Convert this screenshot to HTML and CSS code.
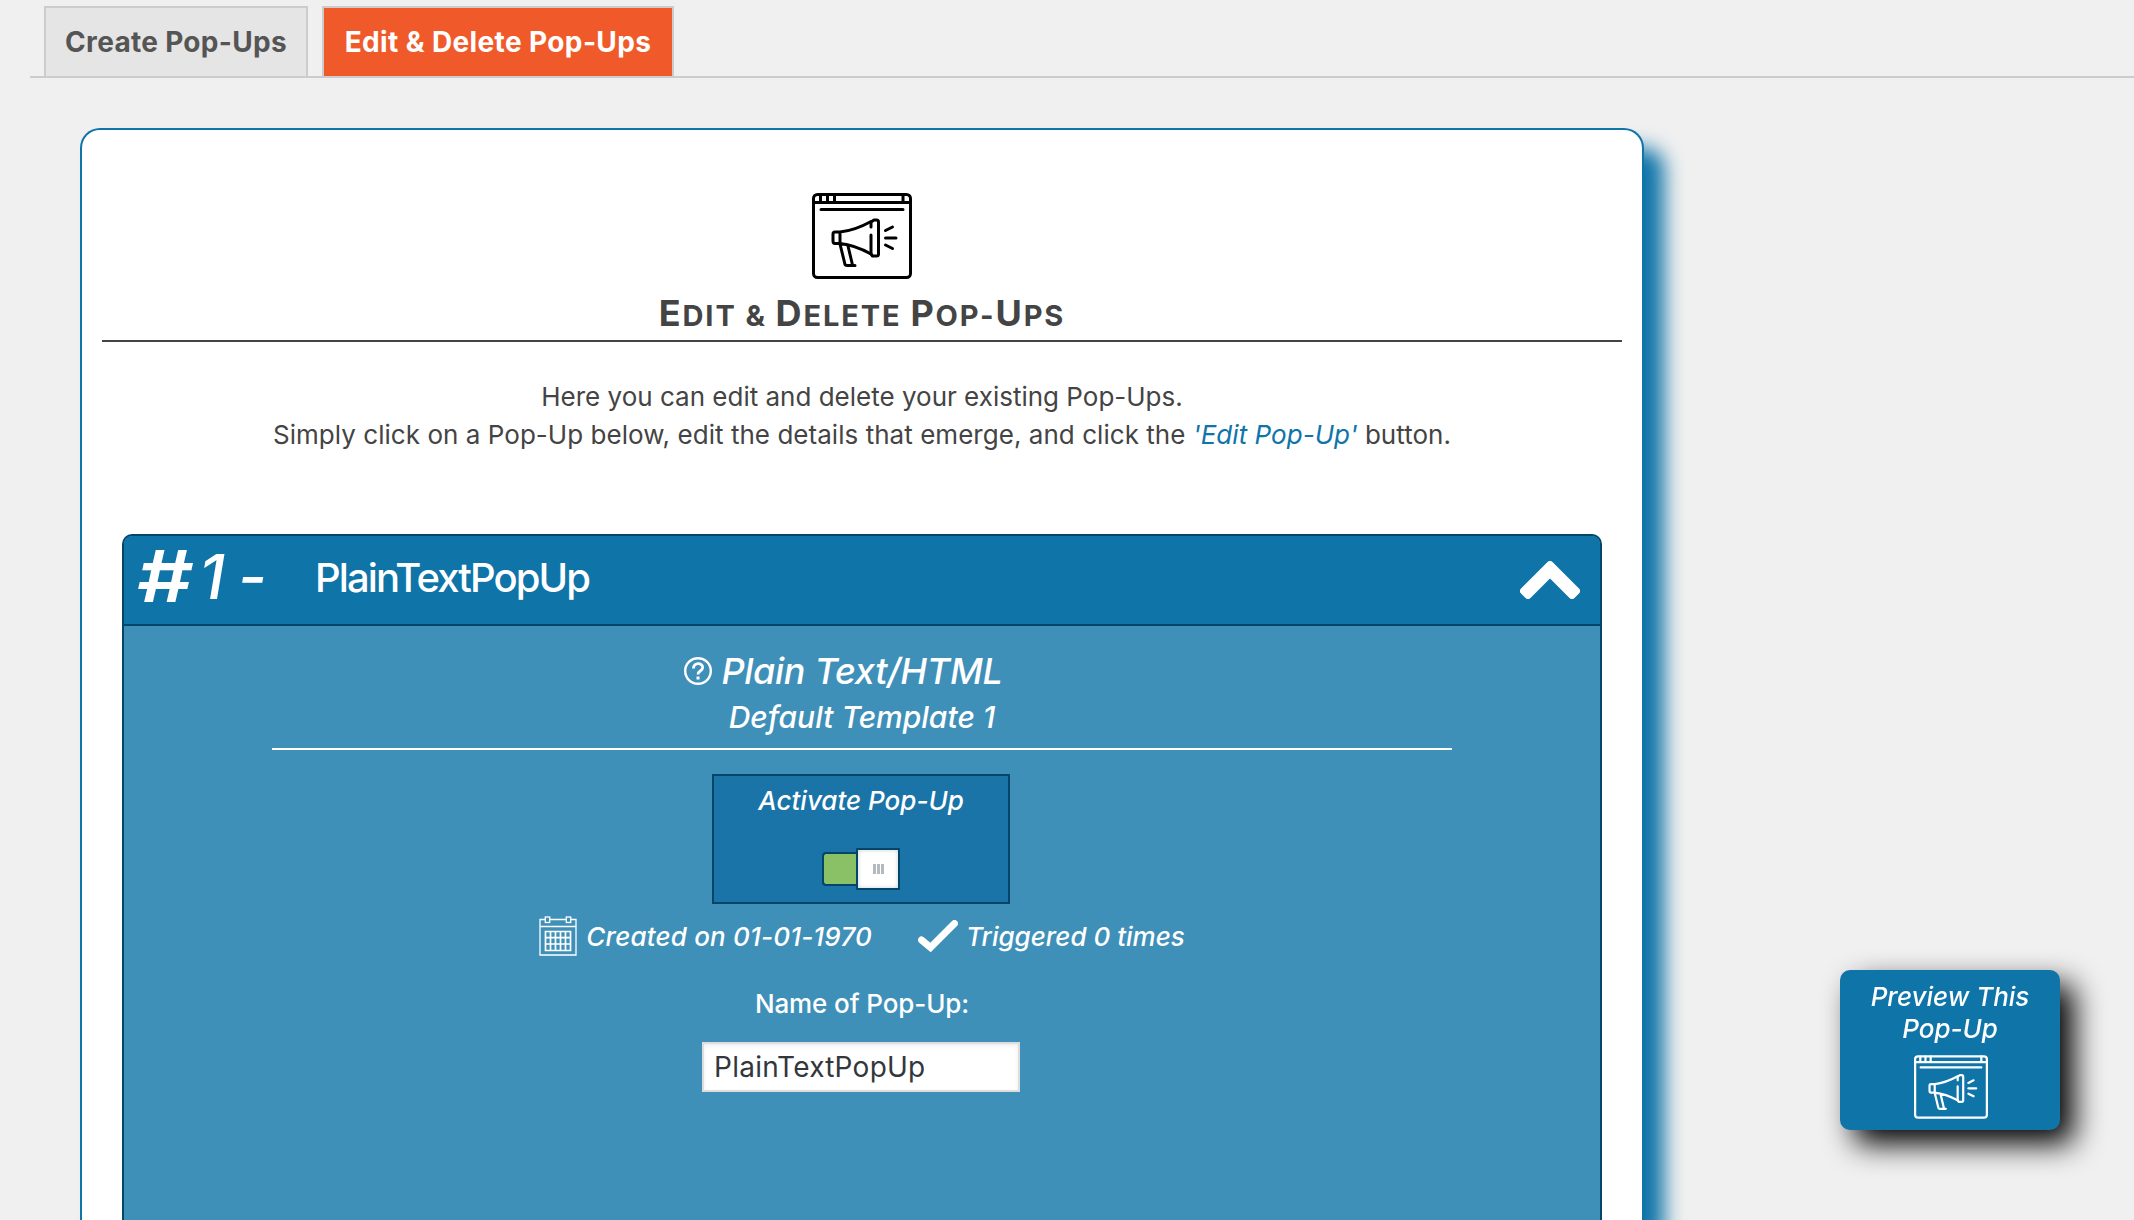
FILE: index.html
```html
<!DOCTYPE html>
<html lang="en">
<head>
<meta charset="utf-8">
<title>Edit &amp; Delete Pop-Ups</title>
<link rel="stylesheet" href="styles.css">
</head>
<body>
<svg class="defs" aria-hidden="true">
  <symbol id="megaphone" viewBox="0 0 100 86">
    <g fill="none" stroke="currentColor" stroke-width="3" stroke-linecap="round" stroke-linejoin="round">
      <rect x="1.5" y="1.5" width="97" height="83" rx="4"/>
      <path d="M1.5 9.5H98.5M8.5 2V9M15.5 2V9M22.5 2V9M91 2V9M9 16.500H91"/>
      <path d="M59 34V29L62 27H64.500Q66.500 27 66.500 29V61Q66.500 63 64.500 63H60.500L59 61V42"/>
      <path d="M59 28.500C50 33.500 38 38 28 39H23Q21 39 21 41V48Q21 50.500 23 50.500H28C38 51.500 50 56 59 61M28 39V50.500M28 51L33 71.500Q33.500 72.500 35 72.500H43M36 53L40.500 72"/>
      <path d="M73.500 37.500L80.500 34M73.500 45H84M73.500 52L80.500 55.500"/>
    </g>
  </symbol>
</svg>
<nav class="tabs">
  <a class="tab tab-create">Create Pop-Ups</a>
  <a class="tab tab-active">Edit &amp; Delete Pop-Ups</a>
</nav>
<main class="card">
  <svg class="card-icon"><use href="#megaphone"/></svg>
  <h1 class="card-title">E<small>dit &amp; </small>D<small>elete </small>P<small>op-</small>U<small>ps</small></h1>
  <p class="intro">Here you can edit and delete your existing Pop-Ups.<br><span class="intro-how">Simply click on a Pop-Up below, edit the details that emerge, and click the <em>'Edit Pop-Up'</em> button.</span></p>
  <section class="item">
    <header class="item-head">
      <span class="hash">#</span><span class="num">1</span><span class="dash">-</span>
      <span class="item-name">PlainTextPopUp</span>
      <svg class="chevron" viewBox="0 0 60 38"><path d="M30 3.500L56.500 30L52 34.500L30 12.500L8 34.500L3.500 30Z" fill="#fff" stroke="#fff" stroke-width="7" stroke-linejoin="round"/></svg>
    </header>
    <div class="item-body">
      <div class="kind">
        <div class="kind-row">
          <svg class="help" viewBox="0 0 28 28" fill="none" stroke="#fff"><circle cx="14" cy="14" r="12.800" stroke-width="2.400"/><path d="M9.500 11.500C9.500 5 18.700 5.400 18.700 10.600C18.700 14 14 13.500 14 17.500" stroke-width="2.800"/><path d="M14 19.500V22.500" stroke-width="3"/></svg>
          <span class="kind-name">Plain Text/HTML</span>
        </div>
        <div class="kind-template">Default Template 1</div>
      </div>
      <div class="activate">
        <span class="activate-label">Activate Pop-Up</span>
        <div class="switch"><div class="track"></div><div class="knob"><i></i><i></i><i></i></div></div>
      </div>
      <div class="meta">
        <svg class="calendar" viewBox="0 0 38 40" fill="none" stroke="#fff" stroke-width="1.300"><path d="M6 3.500H1V39H37V3.500H32M11 3.500H27M1 10.500H37"/><rect x="6.300" y="1" width="4.400" height="5.500"/><rect x="27.300" y="1" width="4.400" height="5.500"/><path d="M6.500 15.500H31.500V34.500H6.500ZM6.500 21.700H31.500M6.500 28H31.500M11.500 15.500V34.500M16.500 15.500V34.500M21.500 15.500V34.500M26.500 15.500V34.500" stroke-width="1.700"/></svg>
        <span class="created">Created on 01-01-1970</span>
        <svg class="check" viewBox="0 0 40 32"><path d="M3.500 20L12.500 27.500L36.500 3.500" fill="none" stroke="#fff" stroke-width="7" stroke-linecap="round"/></svg>
        <span class="triggered">Triggered 0 times</span>
      </div>
      <div class="name-label">Name of Pop-Up:</div>
      <div class="name-field">PlainTextPopUp</div>
    </div>
  </section>
</main>
<aside class="preview">
  <span>Preview This</span><span>Pop-Up</span>
  <svg class="preview-icon"><use href="#megaphone"/></svg>
</aside>
</body>
</html>
```
FILE: styles.css
```css
* { box-sizing: border-box; }
body {
  margin: 0;
  height: 1220px;
  overflow: hidden;
  background: #f0f0f0;
  color: #444;
  font-family: Inter, "Liberation Sans", sans-serif;
  font-size: 26px;
}
.defs { display: none; }
span { white-space: nowrap; }
.tabs {
  display: flex;
  gap: 14px;
  height: 78px;
  margin-left: 30px;
  padding: 6px 0 0 14px;
  border-bottom: 2px solid #ccc;
}
.tab {
  padding: 10px 0;
  border: 2px solid #ccc;
  border-bottom: 0;
  background: #e5e5e5;
  color: #555;
  font-size: 28px;
  font-weight: 700;
  line-height: 48px;
  letter-spacing: .3px;
  text-align: center;
}
.tab-create { width: 264px; }
.tab-active { width: 352px; background: #f05a2b; color: #fff; letter-spacing: .38px; }
.card {
  width: 1564px;
  height: 1092px;
  margin: 50px 0 0 80px;
  padding: 63px 20px 0;
  border: 2px solid #0f74a8;
  border-bottom: 0;
  border-radius: 20px 20px 0 0;
  background: #fff;
  box-shadow: 20px 20px 20px #0f74a8;
  text-align: center;
}
.card-icon { display: block; width: 100px; height: 86px; margin: 0 auto; color: #000; }
.card-title {
  height: 63px;
  margin: 0;
  padding-top: 10px;
  border-bottom: 2px solid #444;
  font-size: 36px;
  font-weight: 700;
  line-height: 48px;
  letter-spacing: 1.9px;
  text-transform: uppercase;
}
.card-title small { font-size: 29px; line-height: 1; }
.intro { margin: 36px 0 0; line-height: 38px; }
.intro-how { letter-spacing: .04px; }
.intro em { color: #0f74a8; }
.item {
  height: 686px;
  margin: 80px 20px 0;
  border: 2px solid #04456a;
  border-bottom: 0;
  border-radius: 10px 10px 0 0;
  background: #3f90b9;
  color: #fff;
  font-weight: 500;
}
.item-head {
  display: flex;
  align-items: center;
  height: 90px;
  padding: 0 20px 0 12px;
  border-bottom: 2px solid #04456a;
  border-radius: 8px 8px 0 0;
  background: #0f74a8;
}
.hash, .num, .dash { padding-bottom: 8px; font-style: italic; }
.hash { width: 46px; padding-bottom: 10px; font-size: 72px; font-weight: 600; transform: scaleX(1.22); transform-origin: left; }
.num { width: 26px; margin-left: 17px; font-size: 62px; }
.dash { width: 28px; margin-left: 13px; font-size: 62px; }
.item-name { margin-left: 49px; padding-bottom: 5px; font-size: 40px; letter-spacing: -1.9px; }
.chevron { width: 60px; height: 38px; margin-left: auto; }
.item-body { display: flex; flex-direction: column; align-items: center; padding-top: 23px; }
.kind { width: 1180px; padding-bottom: 7px; border-bottom: 2px solid #fff; font-style: italic; }
.kind-row { display: flex; align-items: center; justify-content: center; gap: 9px; height: 44px; padding-right: 37px; font-size: 36px; }
.kind-name { letter-spacing: -.3px; }
.help { width: 28px; height: 28px; }
.kind-template { font-size: 30px; line-height: 48px; }
.activate {
  display: flex;
  flex-direction: column;
  align-items: center;
  width: 298px;
  height: 130px;
  margin: 24px 2px 0 0;
  padding-top: 7px;
  border: 2px solid #04456a;
  background: #1a74a8;
  font-style: italic;
  line-height: 36px;
}
.switch { display: flex; align-items: center; margin-top: 29px; }
.track { width: 34px; height: 34px; border: 2px solid #04456a; border-right: 0; border-radius: 4px 0 0 4px; background: #8bc166; }
.knob {
  display: flex;
  align-items: center;
  justify-content: center;
  gap: 1px;
  width: 44px;
  height: 42px;
  border: 2px solid #04456a;
  background: #fff;
  box-shadow: inset 0 0 4px #c4d0d6;
}
.knob i { width: 3px; height: 10px; background: #b4bbc0; }
.meta { display: flex; align-items: center; height: 64px; font-style: italic; }
.calendar { width: 38px; height: 40px; margin-right: 9px; }
.created { letter-spacing: .18px; }
.check { width: 40px; height: 32px; margin: 0 8px 0 46px; }
.name-label { margin-top: 18px; line-height: 36px; letter-spacing: -.1px; }
.name-field {
  width: 318px;
  height: 50px;
  margin: 20px 2px 0 0;
  padding-left: 10px;
  border: 2px solid #ddd;
  background: #fff;
  box-shadow: inset 0 2px 4px rgba(0, 0, 0, .07);
  color: #32373c;
  font-size: 28px;
  font-weight: 400;
  line-height: 47px;
  letter-spacing: .25px;
  text-align: left;
}
.preview {
  position: fixed;
  left: 1840px;
  top: 970px;
  display: flex;
  flex-direction: column;
  align-items: center;
  width: 220px;
  height: 160px;
  padding-top: 11px;
  border-radius: 10px;
  background: #0f74a8;
  box-shadow: 14px 14px 30px #000;
  color: #fff;
  font-weight: 500;
  font-style: italic;
  line-height: 32px;
}
.preview-icon { width: 74px; height: 64px; margin: 10px 0 0 2px; }
```
